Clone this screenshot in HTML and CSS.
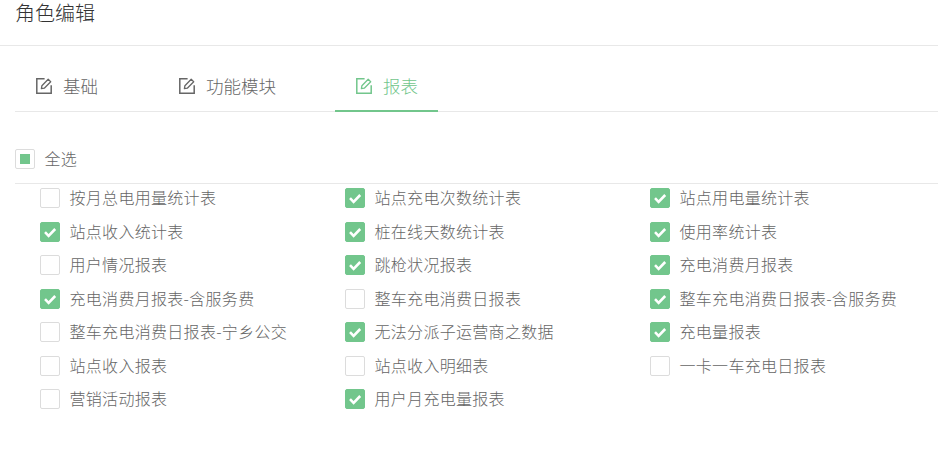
FILE: index.html
```html
<!DOCTYPE html>
<html lang="zh-CN">
<head>
<meta charset="utf-8">
<title>角色编辑</title>
<link rel="stylesheet" href="styles.css">
</head>
<body>
<svg class="defs" width="0" height="0" aria-hidden="true">
  <symbol id="edit" viewBox="0 0 16 16">
    <path d="M8.6 .8H.8v14.4H15.2V7.2" fill="none" stroke="currentColor" stroke-width="1.5"/>
    <path d="M5.4 10.6l.5-2.9L12.2 1.3l2.5 2.5-6.4 6.4z" fill="none" stroke="currentColor" stroke-width="1.3" stroke-linejoin="round"/>
  </symbol>
  <symbol id="tick" viewBox="0 0 20 20">
    <path d="M5 10.2l3.6 3.6L15.2 7" fill="none" stroke="#fff" stroke-width="2.6"/>
  </symbol>
</svg>
<header class="page-head"><h1 class="title">角色编辑</h1></header>
<nav class="tabs">
  <a class="tab tab-a"><svg class="tab-icon"><use href="#edit"/></svg>基础</a>
  <a class="tab tab-b"><svg class="tab-icon"><use href="#edit"/></svg>功能模块</a>
  <a class="tab tab-c active"><svg class="tab-icon"><use href="#edit"/></svg>报表</a>
</nav>
<div class="all-row">
  <label class="check"><span class="box partial"></span><span>全选</span></label>
</div>
<div class="grid">
  <label class="check"><span class="box"></span><span>按月总电用量统计表</span></label>
  <label class="check"><span class="box on"><svg class="tick"><use href="#tick"/></svg></span><span>站点充电次数统计表</span></label>
  <label class="check"><span class="box on"><svg class="tick"><use href="#tick"/></svg></span><span>站点用电量统计表</span></label>
  <label class="check"><span class="box on"><svg class="tick"><use href="#tick"/></svg></span><span>站点收入统计表</span></label>
  <label class="check"><span class="box on"><svg class="tick"><use href="#tick"/></svg></span><span>桩在线天数统计表</span></label>
  <label class="check"><span class="box on"><svg class="tick"><use href="#tick"/></svg></span><span>使用率统计表</span></label>
  <label class="check"><span class="box"></span><span>用户情况报表</span></label>
  <label class="check"><span class="box on"><svg class="tick"><use href="#tick"/></svg></span><span>跳枪状况报表</span></label>
  <label class="check"><span class="box on"><svg class="tick"><use href="#tick"/></svg></span><span>充电消费月报表</span></label>
  <label class="check"><span class="box on"><svg class="tick"><use href="#tick"/></svg></span><span>充电消费月报表-含服务费</span></label>
  <label class="check"><span class="box"></span><span>整车充电消费日报表</span></label>
  <label class="check"><span class="box on"><svg class="tick"><use href="#tick"/></svg></span><span>整车充电消费日报表-含服务费</span></label>
  <label class="check"><span class="box"></span><span>整车充电消费日报表-宁乡公交</span></label>
  <label class="check"><span class="box on"><svg class="tick"><use href="#tick"/></svg></span><span>无法分派子运营商之数据</span></label>
  <label class="check"><span class="box on"><svg class="tick"><use href="#tick"/></svg></span><span>充电量报表</span></label>
  <label class="check"><span class="box"></span><span>站点收入报表</span></label>
  <label class="check"><span class="box"></span><span>站点收入明细表</span></label>
  <label class="check"><span class="box"></span><span>一卡一车充电日报表</span></label>
  <label class="check"><span class="box"></span><span>营销活动报表</span></label>
  <label class="check"><span class="box on"><svg class="tick"><use href="#tick"/></svg></span><span>用户月充电量报表</span></label>
</div>
</body>
</html>
```
FILE: styles.css
```css
* { box-sizing: border-box; }
html, body { margin: 0; padding: 0; }
body {
  width: 938px;
  height: 451px;
  overflow: hidden;
  background: #fff;
  color: #666;
  font-family: "Noto Sans CJK SC", "Noto Sans", sans-serif;
  font-size: 16px;
  font-weight: 300;
}
.defs { position: absolute; }
.page-head {
  height: 46px;
  padding: 0 15px;
  border-bottom: 1px solid #e8e8e8;
}
.title {
  margin: 0;
  font-size: 20px;
  font-weight: 300;
  line-height: 26px;
  color: #333;
}
.tabs {
  display: flex;
  height: 66px;
  margin: 0 0 0 15px;
  border-bottom: 1px solid #e8e8e8;
}
.tab {
  display: flex;
  align-items: center;
  height: 66px;
  padding: 13px 0 0 21px;
  font-size: 17.5px;
  color: #666;
}
.tab-a { width: 143px; }
.tab-b { width: 177px; }
.tab-c { width: 103px; }
.tab-icon { width: 16px; height: 16px; margin-right: 11px; }
.tab.active { color: #72c68c; box-shadow: inset 0 -2px 0 #72c68c; }
.all-row {
  display: flex;
  align-items: center;
  height: 72px;
  margin-left: 15px;
  padding-top: 23px;
  border-bottom: 1px solid #e8e8e8;
}
.grid {
  display: grid;
  grid-template-columns: repeat(3, 305px);
  grid-auto-rows: 33.5px;
  padding: 4px 0 0 40px;
}
.check {
  display: flex;
  align-items: flex-start;
  gap: 9.5px;
  line-height: 18px;
  letter-spacing: .3px;
  white-space: nowrap;
}
.box {
  flex: none;
  width: 20px;
  height: 20px;
  border: 1px solid #dcdcdc;
  border-radius: 2px;
  background: #fff;
}
.box.on { background: #72c68c; border-color: #72c68c; position: relative; }
.box.partial { display: flex; align-items: center; justify-content: center; }
.box.partial::before { content: ""; width: 10px; height: 10px; background: #72c68c; }
.tick { position: absolute; left: -1px; top: -1px; width: 20px; height: 20px; display: block; }
```
